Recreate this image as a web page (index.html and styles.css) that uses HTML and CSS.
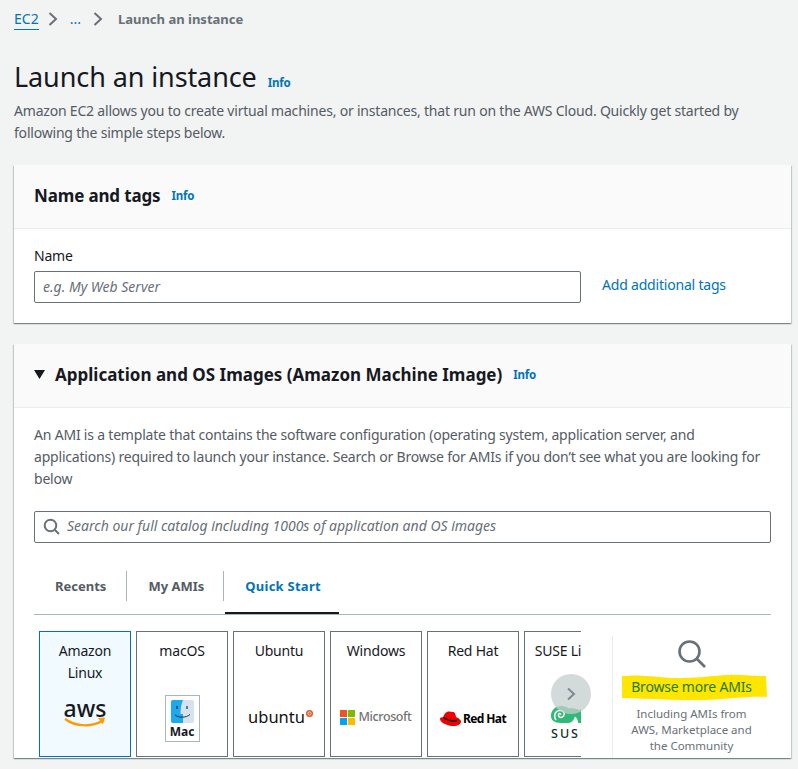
FILE: index.html
```html
<!DOCTYPE html>
<html lang="en">
<head>
    <meta charset="UTF-8">
    <meta name="viewport" content="width=device-width, initial-scale=1.0">
    <title>Launch an instance</title>
    <link rel="stylesheet" href="styles.css">
</head>
<body>
    <nav class="breadcrumbs">
        <a class="crumb-link" href="#">EC2</a>
        <svg class="crumb-sep" width="16" height="16" viewBox="0 0 16 16"><path d="M4.500 2l6.500 6-6.500 6" fill="none" stroke="#687078" stroke-width="2"/></svg>
        <a class="crumb-more" href="#">...</a>
        <svg class="crumb-sep" width="16" height="16" viewBox="0 0 16 16"><path d="M4.500 2l6.500 6-6.500 6" fill="none" stroke="#687078" stroke-width="2"/></svg>
        <span class="crumb-current">Launch an instance</span>
    </nav>

    <div class="page-title">
        <h1>Launch an instance</h1>
        <a class="info" href="#">Info</a>
    </div>
    <p class="page-desc">Amazon EC2 allows you to create virtual machines, or instances, that run on the AWS Cloud. Quickly get started by following the simple steps below.</p>

    <section class="panel panel-name">
        <header class="panel-head">
            <h2>Name and tags</h2>
            <a class="info" href="#">Info</a>
        </header>
        <div class="panel-body">
            <label class="field-label" for="name">Name</label>
            <div class="name-row">
                <input class="text-input" type="text" id="name" placeholder="e.g. My Web Server">
                <a class="add-tags" href="#">Add additional tags</a>
            </div>
        </div>
    </section>

    <section class="panel">
        <header class="panel-head">
            <svg class="caret" width="11" height="9" viewBox="0 0 11 9"><path d="M0 0h11L5.500 9z" fill="#16191f"/></svg>
            <h2>Application and OS Images (Amazon Machine Image)</h2>
            <a class="info" href="#">Info</a>
        </header>
        <div class="panel-body">
            <p class="ami-desc">An AMI is a template that contains the software configuration (operating system, application server, and applications) required to launch your instance. Search or Browse for AMIs if you don’t see what you are looking for below</p>

            <div class="search-box">
                <svg width="18" height="18" viewBox="0 0 18 18"><circle cx="7.500" cy="7.500" r="5.800" fill="none" stroke="#687078" stroke-width="2"/><path d="M11.700 11.700L16 16" stroke="#687078" stroke-width="2"/></svg>
                <input class="search-input" type="text" placeholder="Search our full catalog including 1000s of application and OS images">
            </div>

            <div class="tabs">
                <a class="tab tab-first" href="#">Recents</a>
                <a class="tab" href="#">My AMIs</a>
                <a class="tab tab-active" href="#">Quick Start</a>
            </div>

            <div class="ami-row">
                <div class="carousel">
                    <div class="ami-card ami-selected">
                        <span class="card-name">Amazon Linux</span>
                        <div class="logo logo-aws">
                            <span class="aws-text">aws</span>
                            <svg width="42" height="12" viewBox="0 0 42 12"><path d="M1 2c11 8 27 8 37 2" fill="none" stroke="#f90" stroke-width="2.200"/><path d="M34 1l7-.5-2 7z" fill="#f90"/></svg>
                        </div>
                    </div>
                    <div class="ami-card">
                        <span class="card-name">macOS</span>
                        <div class="logo">
                            <div class="mac-box">
                                <svg width="23" height="23" viewBox="0 0 23 23"><rect width="23" height="23" rx="2" fill="#d6e2ee"/><path d="M2 0h10c-2 5-2.500 9-2.500 14H12v9H2a2 2 0 0 1-2-2V2a2 2 0 0 1 2-2z" fill="#1ea9ee"/><path d="M6 6v3M16 6v3" stroke="#20303c" stroke-width="1.200"/><path d="M4 15c4 3 11 3 15-.5" fill="none" stroke="#20303c" stroke-width="1"/></svg>
                                <span class="mac-text">Mac</span>
                            </div>
                        </div>
                    </div>
                    <div class="ami-card">
                        <span class="card-name">Ubuntu</span>
                        <div class="logo logo-row">
                            <span class="ubuntu-text">ubuntu</span>
                            <svg class="ubuntu-mark" width="7" height="7" viewBox="0 0 7 7"><circle cx="3.500" cy="3.500" r="3.500" fill="#e95420"/><circle cx="3.500" cy="3.500" r="1.600" fill="none" stroke="#fff" stroke-width=".8"/></svg>
                        </div>
                    </div>
                    <div class="ami-card">
                        <span class="card-name">Windows</span>
                        <div class="logo logo-row">
                            <svg class="ms-mark" width="15" height="15" viewBox="0 0 15 15"><rect width="7" height="7" fill="#f25022"/><rect x="8" width="7" height="7" fill="#7fba00"/><rect y="8" width="7" height="7" fill="#00a4ef"/><rect x="8" y="8" width="7" height="7" fill="#ffb900"/></svg>
                            <span class="ms-text">Microsoft</span>
                        </div>
                    </div>
                    <div class="ami-card">
                        <span class="card-name">Red Hat</span>
                        <div class="logo logo-row logo-hat">
                            <svg class="hat-mark" width="21" height="16" viewBox="0 0 21 16"><path d="M7 1c2-1 4 0 6 0 2 0 2.500 2 3 5 2 1 5 2.500 5 4.500 0 3-4 5-9 4.500C6 14.500 0 11 0 8c0-1 1-2 3-1.500C4 3.500 5 2 7 1z" fill="#e00"/><path d="M3.500 6.500c3 2.500 9 4 13.500 3" fill="none" stroke="#000" stroke-width="1.400"/></svg>
                            <span class="hat-text">Red Hat</span>
                        </div>
                    </div>
                    <div class="ami-card">
                        <span class="card-name nowrap">SUSE Linux</span>
                        <div class="logo logo-suse">
                            <svg width="40" height="20" viewBox="0 0 40 20"><path d="M1 11C1 5 5.500 1 11 1c3.500 0 6 1 8 2.500 3-.5 7 0 10 1.500l2.500-.5L33 0l1 5 5 4c-3 2-6 2-8 1.500V18h-3c0-3-1-5-3-6.500-1 3-3 6.500-7 6.500h-7C4 18 1 15 1 11z" fill="#30ba78"/><path d="M6 15c-2.500-3-1.500-9 3.500-9.500S15 9 13.500 11 9 13 8.500 10.500 10 8 11 9.500" fill="none" stroke="#fff" stroke-width="1.500"/></svg>
                            <span class="suse-text">SUSE</span>
                        </div>
                    </div>
                </div>
                <button class="next-btn" type="button">
                    <svg width="10" height="14" viewBox="0 0 10 14"><path d="M2 1.500L8 7l-6 5.500" fill="none" stroke="#7d8998" stroke-width="2"/></svg>
                </button>

                <div class="browse">
                    <svg width="30" height="30" viewBox="0 0 30 30"><circle cx="12.500" cy="12.500" r="10" fill="none" stroke="#687078" stroke-width="2.600"/><path d="M20 20l8 8" stroke="#687078" stroke-width="2.600"/></svg>
                    <div class="browse-link">
                        <svg class="marker" width="146" height="30" viewBox="0 0 146 30" preserveAspectRatio="none"><path d="M1 4c20-2 36 2 60 2s40-4 58-3c10 .5 20 1 26 1l1 21c-20-1-34 2-62 3-24 .5-48-1-83-2z" fill="#ffe600"/></svg>
                        <a href="#">Browse more AMIs</a>
                    </div>
                    <p>Including AMIs from AWS, Marketplace and the Community</p>
                </div>
            </div>
        </div>
    </section>
</body>
</html>
```

FILE: styles.css
```css
* {
    box-sizing: border-box;
}
html, body {
    height: 769px;
    overflow: hidden;
}
body {
    margin: 0;
    padding: 0 7px 0 14px;
    background-color: #f2f3f3;
    color: #16191f;
    font-family: "Noto Sans", "Open Sans", sans-serif;
    font-size: 14px;
    line-height: 22px;
}
a {
    text-decoration: none;
    color: #0073bb;
}
h1, h2, p {
    margin: 0;
}

.breadcrumbs {
    display: flex;
    align-items: center;
    height: 22px;
    margin-top: 8px;
}
.crumb-link {
    color: #0073bb;
    border-bottom: 1px solid #0073bb;
    line-height: 20px;
}
.crumb-sep {
    margin: 0 5px 0 6px;
}
.crumb-more {
    margin: 0 3px 0 4px;
}
.crumb-current {
    font-weight: 700;
    font-size: 13px;
    color: #687078;
    margin-left: 7px;
}

.page-title {
    display: flex;
    align-items: baseline;
    margin-top: 29px;
}
.page-title h1 {
    font-size: 27px;
    line-height: 36px;
    font-weight: 400;
    letter-spacing: -0.1px;
}
.info {
    font-size: 11.500px;
    font-weight: 700;
    letter-spacing: -0.2px;
    margin-left: 11px;
}
.page-desc {
    margin-top: 5px;
    color: #545b64;
    letter-spacing: -0.2px;
}

.panel {
    background-color: #fff;
    box-shadow: 0 1px 1px 0 rgba(0, 28, 36, 0.3), 1px 1px 1px 0 rgba(0, 28, 36, 0.15), -1px 1px 1px 0 rgba(0, 28, 36, 0.15);
    margin-top: 21px;
}
.panel-name {
    margin-top: 21px;
    height: 158px;
}
.panel-name h2 {
    letter-spacing: -0.15px;
}
.panel-head {
    display: flex;
    align-items: center;
    height: 64px;
    padding: 0 20px 2px;
    background-color: #fafafa;
    border-bottom: 1px solid #eaeded;
}
.panel-head h2 {
    font-size: 17px;
    line-height: 22px;
    font-weight: 700;
}
.caret {
    margin-right: 10px;
}
.panel-body {
    padding: 17px 20px 0;
}
.field-label {
    display: block;
    line-height: 20px;
    letter-spacing: -0.2px;
}
.name-row {
    display: flex;
    align-items: center;
    margin-top: 5px;
}
.text-input {
    width: 547px;
    height: 32px;
    padding: 0 8px 2px;
    border: 1px solid #687078;
    border-radius: 2px;
    font: inherit;
}
.text-input::placeholder, .search-input::placeholder {
    color: #687078;
    font-style: italic;
    opacity: 1;
}
.add-tags {
    margin: -4px 0 0 21px;
    letter-spacing: -0.2px;
}

.ami-desc {
    color: #545b64;
    width: 730px;
    margin-top: -1px;
    letter-spacing: -0.2px;
}
.search-box {
    display: flex;
    align-items: center;
    height: 32px;
    margin-top: 21px;
    padding-left: 8px;
    border: 1px solid #687078;
    border-radius: 2px;
}
.search-input {
    flex: 1;
    border: none;
    outline: none;
    margin-left: 6px;
    padding: 0 0 2px;
    font: inherit;
}

.tabs {
    display: flex;
    height: 61px;
    padding-top: 12px;
    margin-top: 11px;
    border-bottom: 1px solid #aab7b8;
}
.tab {
    display: flex;
    align-items: center;
    height: 30px;
    margin-top: 5px;
    padding: 0 19px 0 21px;
    color: #545b64;
    font-weight: 700;
    font-size: 13px;
    border-right: 1px solid #aab7b8;
}
.tab-first {
    padding-right: 20px;
}
.tab-active {
    color: #0073bb;
    border-right: none;
    padding-right: 18px;
    letter-spacing: 0.25px;
    position: relative;
}
.tab-active::after {
    content: "";
    position: absolute;
    left: 1px;
    right: 0;
    bottom: -13px;
    height: 2px;
    background-color: #16191f;
}

.ami-row {
    display: flex;
    position: relative;
    margin-top: 16px;
}
.carousel {
    display: flex;
    gap: 5px;
    width: 542px;
    margin-left: 5px;
    overflow: hidden;
}
.ami-card {
    display: flex;
    flex-direction: column;
    flex: none;
    width: 92px;
    height: 126px;
    padding: 8px 6px 0;
    border: 1px solid #687078;
    text-align: center;
}
.card-name {
    letter-spacing: -0.2px;
}
.ami-selected {
    background-color: #f1faff;
    border-color: #0073bb;
}
.nowrap {
    white-space: nowrap;
}
.logo {
    flex: 1;
    display: flex;
    align-items: center;
    justify-content: center;
    flex-direction: column;
}

.logo-row {
    flex-direction: row;
    padding-top: 16px;
}
.logo-aws {
    line-height: 1;
    padding-bottom: 13px;
}
.aws-text {
    font-size: 23px;
    font-weight: 500;
    line-height: 20px;
}
.logo-aws svg {
    margin-top: -1px;
}
.mac-box {
    display: flex;
    flex-direction: column;
    align-items: center;
    width: 35px;
    height: 47px;
    margin-top: 19px;
    padding-top: 4px;
    border: 1px solid #aab7b8;
    line-height: 1;
}
.mac-text {
    font-size: 12px;
    font-weight: 700;
    margin-top: 3px;
}
.ubuntu-text {
    font-size: 16.500px;
    color: #111;
    line-height: 20px;
    margin-left: 3px;
}
.ubuntu-mark {
    margin: 0 0 8px 1px;
}
.ms-mark {
    flex: none;
    margin-right: 3px;
}
.ms-text {
    font-size: 12.500px;
    color: #737373;
    font-weight: 500;
    letter-spacing: -0.4px;
}
.logo-hat {
    padding-top: 20px;
}
.hat-mark {
    flex: none;
    margin-right: 2px;
}
.hat-text {
    font-size: 12px;
    font-weight: 700;
    color: #000;
    white-space: nowrap;
    letter-spacing: -0.6px;
}
.logo-suse {
    padding-top: 27px;
    line-height: 1;
}
.suse-text {
    font-size: 12.500px;
    font-weight: 500;
    letter-spacing: 2px;
    color: #0c322c;
    margin-top: 3px;
    white-space: nowrap;
}
.next-btn {
    position: absolute;
    left: 517px;
    top: 43px;
    display: flex;
    align-items: center;
    justify-content: center;
    width: 40px;
    height: 40px;
    padding: 0;
    border: none;
    border-radius: 50%;
    background-color: rgba(196, 206, 206, 0.75);
}

.browse {
    display: flex;
    flex-direction: column;
    align-items: center;
    width: 158px;
    height: 122px;
    margin: 5px 0 0 31px;
    padding-top: 3px;
    border-left: 1px solid #eaeded;
    text-align: center;
}
.browse-link {
    position: relative;
    line-height: 20px;
    margin-top: 8px;
    letter-spacing: -0.2px;
    white-space: nowrap;
}
.browse-link a {
    position: relative;
    color: #1d7a1d;
}
.marker {
    position: absolute;
    left: -10px;
    top: -5px;
}
.browse p {
    margin-top: 9px;
    font-size: 11.500px;
    line-height: 16px;
    color: #687078;
    width: 126px;
}
```
